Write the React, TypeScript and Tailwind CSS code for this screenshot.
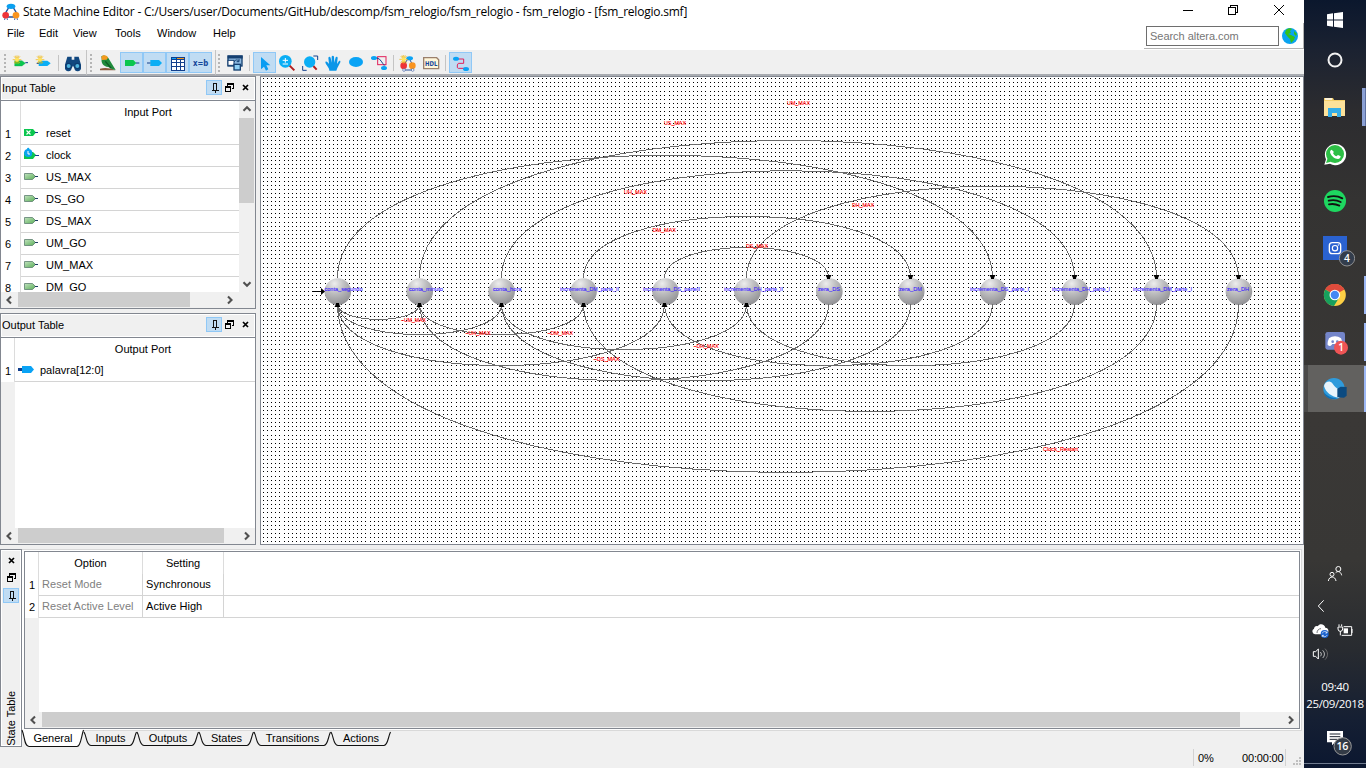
import type { ReactNode } from "react";

/* ---------- shared drawing helpers ---------- */

// Toolbar glyphs are drawn on a grid three times finer than the pixel grid.
function Tool({ x, on, children }: { x: number; on?: boolean; children: ReactNode }) {
  return (
    <div className={on ? "h-[21px] w-[23px] shrink-0 bg-[#c0dcf3] outline outline-1 -outline-offset-1 outline-[#90c8f6]" : "h-[21px] w-[23px] shrink-0"}>
      <svg className="block h-[21px] w-[23px]" viewBox={`${x} 156 69 63`}>{children}</svg>
    </div>
  );
}

function Grip() {
  return (
    <svg className="block h-[21px] w-[3px] shrink-0" viewBox="0 0 3 21" shapeRendering="crispEdges">
      {[1, 5, 9, 13, 17].map((y) => (
        <rect key={y} x="0" y={y + 1} width="2" height="2" fill="#b5b5b5" />
      ))}
    </svg>
  );
}

function Sep() {
  return <div className="h-4 w-px shrink-0 bg-[#c4c4c4]" />;
}

function Arrow({ dir }: { dir: "up" | "down" | "left" | "right" }) {
  const d = {
    up: "M4.5 9.7 8 6.2l3.5 3.5",
    down: "M4.5 6.3 8 9.8l3.5-3.5",
    left: "M10 4.5 6.5 8l3.5 3.5",
    right: "M6 4.5 9.500 8 6 11.500",
  }[dir];
  return (
    <svg className="block size-4 shrink-0" viewBox="0 0 16 16">
      <path d={d} fill="none" stroke="#505050" strokeWidth="2.1" />
    </svg>
  );
}

function PinBox() {
  return (
    <div className="flex h-[15px] w-4 items-center justify-center border border-[#90c8f6] bg-[#c0dcf3]">
      <svg className="block size-[13px]" viewBox="0 0 13 13" shapeRendering="crispEdges">
        <path d="M5 2h4v1H5zM5 2h1v7H5zM8 2h1v7H8zM4 9h7v1H4zM7 10h1v2H7z" fill="#111" />
      </svg>
    </div>
  );
}

function FloatIcon() {
  return (
    <svg className="block h-[9px] w-[9px]" viewBox="0 0 9 9" shapeRendering="crispEdges">
      <path d="M2 0h7v6H7V5h1V2H3v1H2zM0 3h6v6H0zM1 5v3h4V5z" fill="#000" fillRule="evenodd" />
    </svg>
  );
}

function CloseIcon() {
  return (
    <svg className="block size-[7px]" viewBox="0 0 7 7">
      <path d="M1 1l5 5M6 1 1 6" stroke="#000" strokeWidth="1.7" />
    </svg>
  );
}

function DockHeader({ title }: { title: string }) {
  return (
    <div className="flex h-[25px] items-center border border-b-2 border-[#828790] bg-[#f0f0f0] pb-px pr-[6px] outline outline-1 -outline-offset-2 outline-white">
      <span className="flex-1 pl-px">{title}</span>
      <PinBox />
      <div className="w-[3px]" />
      <FloatIcon />
      <div className="w-2" />
      <CloseIcon />
    </div>
  );
}

/* ---------- title bar, menu, toolbar ---------- */

function AppIcon() {
  return (
    <svg className="block size-[18px]" viewBox="0 0 54 54">
      <path d="M20 14 8 34M34 14l12 20M12 42h30" stroke="#27509b" strokeWidth="4" fill="none" />
      <ellipse cx="27" cy="10" rx="13" ry="8" fill="#0aa0f0" />
      <circle cx="11" cy="37" r="10" fill="#ee3338" />
      <circle cx="42" cy="37" r="10" fill="#f9931e" />
      <path d="M8 46v5M16 46v5M38 46v5M46 46v5" stroke="#4b66a8" strokeWidth="3" />
    </svg>
  );
}

function Spark({ x, y }: { x: number; y: number }) {
  return (
    <g transform={`translate(${x} ${y})`}>
      <path d="M0-13V13M-13 0H13M-9-10 9 10M9-10-9 10M-5-12 5 12M5-12-5 12" stroke="#f0b400" strokeWidth="2" />
      <circle r="6" fill="#ffe45e" />
    </g>
  );
}

function Toolbar() {
  return (
    <div className="flex h-[26px] items-center border-b-2 border-[#a9acb1] bg-[#f0f0f0] pt-px">
      <div className="w-1" />
      <Grip />
      <div className="w-[2px]" />
      <Tool x={27}>
        <path d="M44 182h22l10 8-10 8H44z" fill="#0ac64f" stroke="#07a344" />
        <path d="M76 188h8" stroke="#123f8c" strokeWidth="3" />
        <Spark x={51} y={179} />
      </Tool>
      <Tool x={96}>
        <path d="M116 182h26l10 8-10 8h-26z" fill="#0aaef5" />
        <path d="M110 190h7" stroke="#123f8c" strokeWidth="3" />
        <Spark x={120} y={179} />
      </Tool>
      <div className="w-[3px]" />
      <Sep />
      <div className="w-[3px]" />
      <Tool x={186}>
        <path d="M202 170h13v9h8v-9h13l7 24v8a10 10 0 0 1-20 3l-4-8-4 8a10 10 0 0 1-20-3v-8z" fill="#11477f" />
        <circle cx="206" cy="198" r="8" fill="#4fb3dd" stroke="#0d3c70" strokeWidth="4" />
        <circle cx="232" cy="198" r="8" fill="#4fb3dd" stroke="#0d3c70" strokeWidth="4" />
      </Tool>
      <div className="w-px" />
      <div className="h-[25px] w-px bg-[#c4c4c4]" />
      <div className="w-[3px]" />
      <Grip />
      <div className="w-[3px]" />
      <Tool x={288}>
        <path d="M300 206c14-4 32-2 47 5H300z" fill="#8b5a3c" />
        <path d="M304 169c6-5 16-3 21 5l22 36-10-2-12-7c-16-2-22-12-20-24z" fill="#1f8a3b" />
        <path d="M304 172c3-8 15-8 20 1l-4 6-14 1z" fill="#f39a1d" />
        <path d="M316 184l18 21" stroke="#0d5926" strokeWidth="4" />
      </Tool>
      <div className="w-px" />
      <Tool x={360} on>
        <path d="M375 180h25l9 9-9 9h-25z" fill="#0ac64f" />
        <path d="M408 189h10" stroke="#123f8c" strokeWidth="3" />
      </Tool>
      <Tool x={429} on>
        <path d="M451 180h26l9 9-9 9h-26z" fill="#0aaef5" />
        <path d="M441 189h10" stroke="#123f8c" strokeWidth="3" />
      </Tool>
      <Tool x={498} on>
        <g shapeRendering="crispEdges">
          <rect x="513" y="171" width="42" height="42" fill="#123f8c" />
          <path d="M516 180h12v6h-12zM531 180h9v6h-9zM543 180h9v6h-9zM516 189h12v9h-12zM531 189h9v9h-9zM543 189h9v9h-9zM516 201h12v9h-12zM531 201h9v9h-9zM543 201h9v9h-9z" fill="#fff" />
          <path d="M516 174h12v4h-12z" fill="#0aa3f5" />
          <path d="M531 174h21v4h-21z" fill="#f39a1d" />
        </g>
      </Tool>
      <Tool x={567} on>
        <text x="579" y="199" fontFamily="'DejaVu Sans', sans-serif" fontWeight="700" fontSize="24" fill="#14479a" textLength="46" lengthAdjust="spacingAndGlyphs">x=b</text>
      </Tool>
      <div className="w-[3px]" />
      <div className="h-[25px] w-px bg-[#c4c4c4]" />
      <div className="w-[2px]" />
      <Grip />
      <div className="w-[3px]" />
      <Tool x={672}>
        <rect x="684" y="168" width="42" height="30" fill="#8db9e0" stroke="#143f70" strokeWidth="4" />
        <path d="M683 171h45" stroke="#143f70" strokeWidth="9" />
        <rect x="684" y="181" width="18" height="15" fill="#fff" stroke="#143f70" strokeWidth="3" />
        <rect x="702" y="193" width="19" height="17" fill="#8ed0f5" stroke="#143f70" strokeWidth="4" />
        <path d="M703 186c2-8 10-8 14-2m0 0v-7m0 8h-7" stroke="#143f70" strokeWidth="3" fill="none" />
      </Tool>
      <div className="w-[2px]" />
      <Sep />
      <div className="w-[3px]" />
      <Tool x={9} on>
        <path d="M33 171v37l9-8 6 12 7-4-6-12h12z" fill="#0a9df2" />
      </Tool>
      <Tool x={78}>
        <path d="M118 196l15 15" stroke="#b01e1e" strokeWidth="6" />
        <circle cx="106" cy="184" r="19" fill="#0aaef5" />
        <path d="M98 181h16M106 174v14M98 192h16" stroke="#fff" strokeWidth="3" />
      </Tool>
      <Tool x={147}>
        <path d="M190 198l10 11" stroke="#b01e1e" strokeWidth="6" />
        <circle cx="179" cy="186" r="17" fill="#0aaef5" />
        <path d="M190 168h13v12M158 198v13h12" stroke="#123f8c" strokeWidth="3" fill="none" />
      </Tool>
      <Tool x={216}>
        <path d="M238 212c0-10-12-18-12-26 3-3 7 0 11 6l-2-19c2-4 6-3 7 1l3 14v-18c1-4 6-4 7 0l1 18 4-16c2-3 6-2 6 2l-2 18 6-9c3-2 5 0 4 4l-9 17-3 8z" fill="#0a96e8" />
      </Tool>
      <Tool x={285}>
        <ellipse cx="318" cy="186" rx="21" ry="15" fill="#0aa3f5" />
      </Tool>
      <Tool x={354}>
        <path d="M364 174h18M402 196v8" stroke="#123f8c" strokeWidth="2" />
        <ellipse cx="372" cy="174" rx="9" ry="6" fill="#0aa3f5" />
        <ellipse cx="402" cy="204" rx="9" ry="6" fill="#0aa3f5" />
        <rect x="383" y="170" width="25" height="24" fill="none" stroke="#e0215a" strokeWidth="3" />
        <path d="M381 174c12 2 14 16 23 22" stroke="#123f8c" strokeWidth="3" fill="none" />
      </Tool>
      <div className="w-[2px]" />
      <Sep />
      <div className="w-[2px]" />
      <Tool x={438}>
        <path d="M473 178l-12 17M479 178l8 15M462 210h24" stroke="#27509b" strokeWidth="3" />
        <ellipse cx="479" cy="175" rx="10" ry="6" fill="#0aa3f5" />
        <circle cx="461" cy="197" r="10" fill="#ee3338" />
        <circle cx="487" cy="197" r="10" fill="#f9931e" />
        <circle cx="462" cy="210" r="4" fill="#fff" stroke="#4b66a8" strokeWidth="2" />
        <circle cx="488" cy="210" r="4" fill="#fff" stroke="#4b66a8" strokeWidth="2" />
        <Spark x={461} y={178} />
      </Tool>
      <Tool x={507}>
        <path d="M521 173h39l6 6v27h-45z" fill="#fff6da" stroke="#9b806c" strokeWidth="4" />
        <text x="525" y="198" fontFamily="'DejaVu Sans', sans-serif" fontWeight="700" fontSize="20" fill="#14479a" textLength="37" lengthAdjust="spacingAndGlyphs">HDL</text>
      </Tool>
      <div className="w-[3px]" />
      <Sep />
      <div className="w-[3px]" />
      <Tool x={597} on>
        <path d="M620 177h21v13h-16l-3 5v8l3 2h20" stroke="#e0215a" strokeWidth="3" fill="none" />
        <ellipse cx="618" cy="176" rx="9" ry="6" fill="#0aa3f5" />
        <ellipse cx="648" cy="207" rx="9" ry="6" fill="#0aa3f5" />
      </Tool>
    </div>
  );
}

function TopArea() {
  return (
    <div className="flex h-[50px] justify-between bg-white">
      <div className="flex flex-col">
        <div className="flex h-6 items-center pl-[2px]">
          <AppIcon />
          <span className="whitespace-pre pl-[3px] font-['Open_Sans','Noto_Sans',sans-serif] text-[12px] tracking-[-0.22px]">
            State Machine Editor - C:/Users/user/Documents/GitHub/descomp/fsm_relogio/fsm_relogio - fsm_relogio - [fsm_relogio.smf]
          </span>
        </div>
        <div className="flex h-[17px] items-center pl-[7px]">
          <span className="w-8">File</span>
          <span className="w-[34px]">Edit</span>
          <span className="w-[42px]">View</span>
          <span className="w-[42px]">Tools</span>
          <span className="w-14">Window</span>
          <span>Help</span>
        </div>
      </div>
      <div className="flex flex-col items-end">
        <svg className="block h-[23px] w-[130px]" viewBox="1174 0 130 23" shapeRendering="crispEdges">
          <path d="M1183 10.500h10M1228.500 7.500h7v7h-7zM1230.500 7v-2h7v7h-2" stroke="#000" fill="none" />
          <path d="M1274 5l10 10M1284 5l-10 10" stroke="#000" shapeRendering="auto" />
        </svg>
        <div className="flex h-[26px] w-[160px] items-center border-b border-r border-[#b4b4b4] pl-[2px]">
          <div className="flex h-5 w-[133px] items-center border border-[#6e6e6e] pl-[3px] text-[#767676] tracking-[-0.03px]">Search altera.com</div>
          <svg className="ml-[3px] block size-4" viewBox="0 0 16 16">
            <circle cx="8" cy="8" r="8" fill="#0aa3f0" />
            <path d="M4 2c2-2 5-2 6-1L8 3l1 2-3 1 3 1 4 2-1 3-3 3-1-4-3-3-2-3z" fill="#35c11c" />
            <path d="M12 3l3 3-1 2-2-2z" fill="#35c11c" />
          </svg>
        </div>
      </div>
    </div>
  );
}

/* ---------- left docks ---------- */

const inputs = ["reset", "clock", "US_MAX", "DS_GO", "DS_MAX", "UM_GO", "UM_MAX", "DM_GO"];

function PortIcon({ kind }: { kind: number }) {
  if (kind === 0)
    return (
      <svg className="block h-3 w-[15px]" viewBox="0 0 15 12">
        <path d="M0 2h9l3 3.500L9 9H0z" fill="#0ac64f" />
        <path d="M11 5.500h3" stroke="#123f8c" />
        <path d="M2.500 3.500l4 4M6.500 3.500l-4 4" stroke="#fff" strokeWidth="1.1" />
      </svg>
    );
  if (kind === 1)
    return (
      <svg className="block h-3 w-[15px] overflow-visible" viewBox="0 0 15 12">
        <path d="M0 3h9l3 3-3 4H0z" fill="#0ac64f" />
        <path d="M11 6.500h4" stroke="#123f8c" />
        <circle cx="4.200" cy="4" r="4.100" fill="#0aa3f0" />
        <path d="M4 2v3h2" stroke="#fff" fill="none" />
        <circle cx="4.200" cy="0" r="1.200" fill="#0aa3f0" />
      </svg>
    );
  return (
    <svg className="block h-3 w-[15px]" viewBox="0 0 15 12">
      <defs>
        <linearGradient id="port" x1="0" x2="1" y2="1">
          <stop offset="0" stopColor="#c3e3c0" />
          <stop offset="1" stopColor="#58ad55" />
        </linearGradient>
      </defs>
      <path d="M.5 2.500h8l3 3-3 3h-8z" fill="url(#port)" stroke="#5d7f70" strokeWidth=".8" />
      <path d="M11 5.500h3" stroke="#1d3c63" />
    </svg>
  );
}

function InputDock() {
  return (
    <div className="flex h-[233px] flex-col">
      <DockHeader title="Input Table" />
      <div className="flex flex-1 flex-col border border-t-0 border-[#828790] bg-white">
        <div className="flex h-[191px]">
          <div className="flex w-[238px] flex-col overflow-hidden">
            <div className="flex h-[22px] shrink-0">
              <div className="w-5 border-r border-[#dcdcdc]" />
              <div className="flex flex-1 items-center justify-center pl-9">Input Port</div>
            </div>
            {inputs.map((name, i) => (
              <div key={name} className="flex h-[22px] shrink-0">
                <div className="flex w-5 items-center border-r border-[#dcdcdc] pb-px pl-1">{i + 1}</div>
                <div className="flex flex-1 items-center border-b border-[#d4d4d4] pb-0.5 pl-[3px]">
                  <PortIcon kind={i} />
                  <span className="pl-[7px]">{name}</span>
                </div>
              </div>
            ))}
          </div>
          <div className="flex w-4 flex-col justify-between bg-[#f0f0f0]">
            <div>
              <Arrow dir="up" />
              <div className="mt-px h-[85px] w-[15px] bg-[#cdcdcd]" />
            </div>
            <Arrow dir="down" />
          </div>
        </div>
        <div className="flex h-4 bg-[#f0f0f0]">
          <Arrow dir="left" />
          <div className="ml-px h-[15px] w-[172px] bg-[#cdcdcd]" />
          <div className="flex-1" />
          <Arrow dir="right" />
          <div className="w-[17px]" />
        </div>
      </div>
    </div>
  );
}

function OutputDock() {
  return (
    <div className="mt-1 flex h-[232px] flex-col">
      <DockHeader title="Output Table" />
      <div className="flex flex-1 flex-col border border-t-0 border-[#828790] bg-white">
        <div className="flex h-[22px]">
          <div className="w-[14px] border-r border-[#dcdcdc]" />
          <div className="flex flex-1 items-center justify-center pl-4">Output Port</div>
        </div>
        <div className="flex h-[22px]">
          <div className="flex w-[14px] items-center border-r border-[#dcdcdc] pb-px pl-1">1</div>
          <div className="flex flex-1 items-center border-b border-[#d4d4d4] pb-0.5 pl-[3px]">
            <svg className="block h-3 w-4" viewBox="0 0 16 12">
              <path d="M0 4h5v3H0z" fill="#123f8c" />
              <path d="M4 2h9l3 3.500L13 9H4z" fill="#0aa3f5" />
            </svg>
            <span className="pl-[6px]">palavra[12:0]</span>
          </div>
        </div>
        <div className="w-[14px] flex-1 bg-[#f0f0f0]" />
        <div className="flex h-4 bg-[#f0f0f0]">
          <Arrow dir="left" />
          <div className="ml-px h-[15px] w-[206px] bg-[#cdcdcd]" />
          <div className="flex-1" />
          <Arrow dir="right" />
        </div>
      </div>
    </div>
  );
}

/* ---------- state diagram ---------- */

// [text, left edge, width]
const states: [string, number, number][] = [
  ["conta_segundo", 324.5, 38],
  ["conta_minuto", 409, 34],
  ["conta_hora", 493, 28.5],
  ["incrementa_DM_parte_II", 560, 59],
  ["incrementa_DS_parteII", 643, 57],
  ["incrementa_DH_parte_II", 724, 59],
  ["zera_DS", 818, 22],
  ["zera_DM", 899, 23],
  ["incrementa_DS_parte_I", 970, 59],
  ["incrementa_DH_parte_I", 1052, 58],
  ["incrementa_DM_parte_I", 1133, 59],
  ["zera_DH", 1227, 22],
];

// [source state, target state, crest y]
const arcsAbove: [number, number, number][] = [
  [0, 8, 155.3],
  [1, 10, 140.5],
  [2, 9, 170.8],
  [3, 7, 216.5],
  [4, 6, 247.5],
  [5, 11, 186.2],
];
const arcsBelow: [number, number, number][] = [
  [1, 0, 319.4],
  [2, 0, 334.5],
  [3, 1, 334.5],
  [4, 0, 365.5],
  [5, 2, 349.5],
  [6, 1, 380.6],
  [7, 2, 380.6],
  [8, 4, 365.6],
  [9, 5, 365.6],
  [10, 3, 411.4],
  [11, 0, 472.4],
];

// [text, left edge, width, baseline]
const conditions: [string, number, number, number][] = [
  ["UM_MAX", 787, 23, 105],
  ["US_MAX", 664, 22, 125],
  ["UH_MAX", 624, 23, 194],
  ["DM_MAX", 652.5, 23.5, 232],
  ["DS_MAX", 746, 22, 248],
  ["DH_MAX", 852, 22, 207],
  ["~UM_MAX", 401, 25, 322],
  ["~UH_MAX", 465.5, 25, 335],
  ["~DM_MAX", 547.5, 25.5, 335],
  ["~DS_MAX", 593.5, 26, 361],
  ["~DH_MAX", 693.5, 25, 348],
  ["Clock_Restart", 1043, 35, 451],
];

// The grid pitch is fractional, so dots snap down to whole pixels.
const pitch = 4.096;
const stateX = (i: number) => Math.floor(337.3 + 20 * pitch * i - 0.05);
const steps = (origin: number, from: number, to: number) => {
  const out: number[] = [];
  for (let k = Math.ceil((from - origin) / pitch); origin + k * pitch < to; k++) out.push(Math.floor(origin + k * pitch));
  return out;
};
const gridColumns = steps(337.3, 262, 1302).map((x) => `M${x} 77h1v467h-1z`).join("");
const gridRows = steps(291.72, 78, 543).map((y) => `M261 ${y}h1042v1h-1042z`).join("");

function arc(from: number, to: number, y: number, crest: number) {
  const c = y + ((crest - y) * 4) / 3;
  const a = stateX(from) + 0.5;
  const b = stateX(to) + 0.5;
  return `M${a} ${y}C${a} ${c} ${b} ${c} ${b} ${y}`;
}

function Diagram() {
  return (
    <div className="h-[469px] w-[1044px] border border-[#828790] bg-white">
      <svg className="block h-[467px] w-[1042px]" viewBox="261 77 1042 467">
        <defs>
          <clipPath id="rows"><path d={gridRows} shapeRendering="crispEdges" /></clipPath>
          <radialGradient id="ball" cx=".38" cy=".2" r=".85">
            <stop offset="0" stopColor="#ededed" />
            <stop offset=".45" stopColor="#bcbcbe" />
            <stop offset="1" stopColor="#8c8c90" />
          </radialGradient>
        </defs>
        <path d={gridColumns} clipPath="url(#rows)" shapeRendering="crispEdges" />
        {states.map(([name], i) => (
          <circle key={name} cx={337.8 + 20 * pitch * i} cy="291.600" r="13.300" fill="url(#ball)" />
        ))}
        <g fill="none" stroke="#6a6a6a" strokeWidth="1" shapeRendering="crispEdges">
          {arcsAbove.map(([a, b, c]) => <path key={a} d={arc(a, b, 278, c)} />)}
          {arcsBelow.map(([a, b, c]) => <path key={a} d={arc(a, b, 304, c)} />)}
          <path d="M312 291.500h10" stroke="#000" />
        </g>
        <path d="M321 288v7l4-3.500z" />
        {arcsAbove.map(([a, b]) => <path key={a} d={`M${stateX(b) - 2.5} 275h6l-1.500 3v1h-3v-1z`} />)}
        {[0, 1, 2, 3, 4, 5].map((i) => <path key={i} d={`M${stateX(i) - 2.5} 307h6l-1.500-3v-1h-3v1z`} />)}
        <g fontFamily="'Liberation Sans', Arial, sans-serif" fontSize="6">
          {states.map(([name, x, w]) => (
            <text key={name} x={x} y="291" textLength={w} lengthAdjust="spacingAndGlyphs" fill="#3a1cff" stroke="#3a1cff" strokeWidth=".1">{name}</text>
          ))}
          {conditions.map(([name, x, w, y]) => (
            <text key={name} x={x} y={y} textLength={w} lengthAdjust="spacingAndGlyphs" fill="#ff0000" stroke="#ff0000" strokeWidth=".15">{name}</text>
          ))}
        </g>
      </svg>
    </div>
  );
}

/* ---------- bottom dock ---------- */

const tabs: [string, number][] = [
  ["General", 62],
  ["Inputs", 53],
  ["Outputs", 62],
  ["States", 55],
  ["Transitions", 77],
  ["Actions", 60],
];

function Tab({ name, width, active }: { name: string; width: number; active: boolean }) {
  return (
    <div className="grid shrink-0" style={{ width }}>
      <svg className="col-start-1 row-start-1 block h-4 w-full overflow-visible" viewBox={`0 0 ${width} 16`}>
        <path
          d={`M0 ${active ? -1 : 1}C3 6 2 ${active ? 15 : 14} 7 ${active ? 15.5 : 14.5}H${width - 7}C${width - 3} ${active ? 15 : 14} ${width - 3} 6 ${width - 0.5} ${active ? -1 : 1}`}
          fill={active ? "#fff" : "#f0f0f0"}
          stroke="#111"
          strokeWidth="1.100"
        />
      </svg>
      <span className="z-10 col-start-1 row-start-1 text-center leading-[15px]">{name}</span>
    </div>
  );
}

function BottomDock() {
  return (
    <div className="mt-1 flex h-[198px]">
      <div className="flex w-[22px] flex-col items-center justify-between border border-[#828790] pb-0 pt-[7px] outline outline-1 -outline-offset-2 outline-white">
        <div className="flex flex-col items-center">
          <CloseIcon />
          <div className="h-[9px]" />
          <FloatIcon />
          <div className="h-[6px]" />
          <PinBox />
        </div>
        <span className="rotate-180 whitespace-nowrap [writing-mode:vertical-rl]">State Table</span>
      </div>
      <div className="flex w-[1280px] flex-col">
        <div className="h-[182px] border border-l-0 border-[#d9d9d9] bg-white pl-[2px] pt-px">
          <div className="flex h-[178px] w-[1276px] flex-col border border-[#828790] bg-white">
            <div className="flex h-[22px]">
              <div className="w-[14px] border-r border-[#dcdcdc]" />
              <div className="flex w-[104px] items-center justify-center border-r border-[#dcdcdc] pb-px">Option</div>
              <div className="flex w-[81px] items-center justify-center border-r border-[#dcdcdc] pb-px">Setting</div>
            </div>
            {[["Reset Mode", "Synchronous"], ["Reset Active Level", "Active High"]].map(([a, b], i) => (
              <div key={a} className="flex h-[22px]">
                <div className="flex w-[14px] items-center border-r border-[#dcdcdc] pb-px pl-1">{i + 1}</div>
                <div className="flex flex-1 items-center border-b border-[#d4d4d4]">
                  <div className="flex h-full w-[104px] items-center border-r border-[#d4d4d4] pb-0.5 pl-[3px] tracking-[0.06px] text-[#808080]">{a}</div>
                  <div className="flex h-full w-[81px] items-center border-r border-[#d4d4d4] pb-0.5 pl-[3px] tracking-[0.06px]">{b}</div>
                </div>
              </div>
            ))}
            <div className="w-[14px] flex-1 bg-[#f0f0f0]" />
            <div className="flex h-4 bg-[#f0f0f0]">
              <Arrow dir="left" />
              <div className="ml-px h-[15px] w-[1198px] bg-[#cdcdcd]" />
              <div className="flex-1" />
              <Arrow dir="right" />
            </div>
          </div>
        </div>
        <div className="flex h-4">
          {tabs.map(([name, width], i) => <Tab key={name} name={name} width={width} active={i === 0} />)}
        </div>
      </div>
    </div>
  );
}

/* ---------- taskbar ---------- */

function Slot({ mark, active, wide, children }: { mark?: boolean; active?: boolean; wide?: boolean; children: ReactNode }) {
  return (
    <div className={active ? "flex h-[47px] shrink-0 items-center justify-end border-l-4 border-[#4b4a49] bg-[#62615f]" : "flex h-[47px] shrink-0 items-center justify-end"}>
      {children}
      <div className={mark ? (active ? "ml-[9px] h-[46px] w-[2px] bg-[#9db8f5]" : wide ? "ml-[7px] h-[38px] w-1 border-r border-[#5c6f9f] bg-[#8ba0d4]" : "ml-[9px] h-[38px] w-[2px] bg-[#9db8f5]") : "ml-[11px]"} />
    </div>
  );
}

// Each glyph occupies a 40x40 px cell.
function Glyph({ box, children }: { box: string; children: ReactNode }) {
  return <svg className="block size-10 shrink-0" viewBox={box}>{children}</svg>;
}

function Taskbar() {
  return (
    <div className="flex h-[768px] w-[62px] flex-col bg-[linear-gradient(#0b172d_0px,#1b2231_50px,#2c2c2f_110px,#343332_200px,#3a3836_420px,#383735_560px,#282b30_650px,#151f33_720px,#0b1730_768px)] font-['Open_Sans','Noto_Sans',sans-serif] text-white">
      <div className="flex h-10 shrink-0 items-center justify-center">
        <svg className="block size-4" viewBox="0 0 16 16" fill="#fff">
          <path d="M0 2.200 6 1.300v6.200H0zM7 1.200 16 0v7.500H7zM0 8.500h6v6.200l-6-.9zM7 8.500h9V16l-9-1.200z" />
        </svg>
      </div>
      <div className="flex h-10 shrink-0 items-center justify-center">
        <svg className="block size-4" viewBox="0 0 16 16"><circle cx="8" cy="8" r="6.500" fill="none" stroke="#f2f2f2" strokeWidth="2" /></svg>
      </div>
      <div className="h-[3px] shrink-0" />
      <Slot mark wide>
        <Glyph box="0 0 40 40">
          <path d="M9 11h9l1 2h11v16H9z" fill="#f5cf6a" />
          <path d="M9 14h21v15H9z" fill="#fde29a" />
          <path d="M10 12h7" stroke="#fff" strokeWidth="1.500" />
          <path d="M13 21h13v9h-4v-4h-5v4h-4z" fill="#35aee8" />
        </Glyph>
      </Slot>
      <Slot>
        <Glyph box="75 -21 120 120">
          <path d="M103 71l5-16A32 32 0 1 1 120 68z" fill="#fff" />
          <circle cx="135" cy="39" r="27" fill="#2dbf45" />
          <path d="M108 66l6-17 9 13z" fill="#2dbf45" />
          <path d="M125 26c-4 1-6 6-4 11 4 9 13 17 23 17 5 0 8-4 8-8l-8-4-5 4c-5-2-8-6-10-10l3-3z" fill="#fff" />
        </Glyph>
      </Slot>
      <Slot>
        <Glyph box="75 120 120 120">
          <circle cx="135" cy="180" r="33" fill="#1ed760" />
          <path d="M114 168c14-4 30-3 43 4M116 179c12-3 25-2 36 4M117 190c11-2 21-1 31 4" fill="none" stroke="#111" strokeWidth="5.500" strokeLinecap="round" />
        </Glyph>
      </Slot>
      <Slot>
        <Glyph box="75 261 120 120">
          <rect x="99" y="285" width="72" height="72" fill="#2a62d0" />
          <rect x="118" y="305" width="34" height="33" rx="9" fill="none" stroke="#fff" strokeWidth="4" />
          <circle cx="135" cy="321.500" r="8" fill="none" stroke="#fff" strokeWidth="3.500" />
          <circle cx="145" cy="312" r="2" fill="#fff" />
          <circle cx="171" cy="352" r="23" fill="#333d4c" stroke="#a0a0a0" strokeWidth="2.500" />
          <text x="171" y="363" textAnchor="middle" fontSize="31" fontWeight="600" fill="#fff">4</text>
        </Glyph>
      </Slot>
      <Slot mark>
        <Glyph box="75 402 120 120">
          <circle cx="134.500" cy="462" r="33" fill="#fdd044" />
          <path d="M134.500 462 106 445.500A33 33 0 0 1 163 445.500z" fill="#de4b3c" />
          <path d="M134.500 447h29a33 33 0 0 0-58-2z" fill="#de4b3c" />
          <path d="M106 445.500a33 33 0 0 0 26 49.500l16-26-14-7z" fill="#17a05d" />
          <circle cx="134.500" cy="462" r="16" fill="#fff" />
          <circle cx="134.500" cy="462" r="12.500" fill="#4587f3" />
        </Glyph>
      </Slot>
      <Slot mark>
        <Glyph box="75 543 120 120">
          <rect x="106" y="573" width="59" height="53" rx="7" fill="#7485c9" />
          <path d="M117 592c10-8 26-8 36 0 3 7 5 13 4 20-5 3-8 4-11 1l-3-4h-16l-3 4c-3 3-7 2-11-1-1-7 1-13 4-20z" fill="#fff" />
          <circle cx="128" cy="602" r="4" fill="#7485c9" />
          <circle cx="142" cy="602" r="4" fill="#7485c9" />
          <circle cx="153" cy="620" r="21" fill="#ef5455" />
          <text x="153" y="631" textAnchor="middle" fontSize="30" fontWeight="600" fill="#fff">1</text>
        </Glyph>
      </Slot>
      <Slot mark active>
        <Glyph box="75 684 120 120">
          <circle cx="132" cy="743" r="32" fill="#2f9bdc" />
          <path d="M102 735c2-10 10-14 18-13 12 3 10 20 35 25l-8 24c-22-4-40-16-45-36z" fill="#e9f4fb" />
          <path d="M101 752c8 12 22 19 42 19-16 8-38 1-42-19z" fill="#0f6fb4" />
          <path d="M142 743l10-6 18 1v26l-8 6-20-1z" fill="#0b4a80" />
        </Glyph>
      </Slot>
      <div className="h-[152px] shrink-0" />
      <svg className="block h-[104px] w-[62px] shrink-0" viewBox="372 132 186 312">
        <g fill="none" stroke="#fff" strokeWidth="3">
          <circle cx="475" cy="147" r="7.500" />
          <circle cx="456" cy="163" r="6" />
          <path d="M445 183c2-16 21-16 23 0M467 158c8-7 16-2 18 8" />
          <path d="M431 241l-16 17 16 17" />
          <path d="M491 320h24v26h-30M516 327v12M477 313v6M485 313v6M474 321h14v6a7 7 0 0 1-14 0zM481 333v13" />
        </g>
        <path d="M491 325h13v15h-13z" fill="#fff" />
        <path d="M405 343a9 9 0 0 1-3-17c1-8 9-9 11-7 6-10 21-7 23 4 9 0 12 10 7 16l-8 4z" fill="#fff" />
        <path d="M411 339c0-8 5-13 12-13" stroke="#32353b" strokeWidth="2" fill="none" />
        <circle cx="434" cy="342" r="12" fill="#1c63cf" />
        <path d="M427 340c2-7 11-8 14-1m0-5v5h-5M441 345c-2 6-11 7-14 1m0 5v-5h5" stroke="#fff" strokeWidth="2" fill="none" />
        <path d="M400 395h7l8-8v30l-8-8h-7z" stroke="#fff" strokeWidth="3" fill="none" />
        <path d="M421 396c4 4 4 9 0 13M428 391c7 7 7 16 0 23" stroke="#ddd" strokeWidth="2.500" fill="none" />
        <path d="M435 386c10 10 10 23 0 33" stroke="#777" strokeWidth="2.500" fill="none" />
      </svg>
      <div className="flex h-[54px] shrink-0 flex-col items-center pt-[10px] text-[11.5px] leading-[17px] tracking-[-0.35px]">
        <span>09:40</span>
        <span className="whitespace-nowrap">25/09/2018</span>
      </div>
      <svg className="block h-10 w-[62px] shrink-0" viewBox="372 606 186 120">
        <path d="M441 633h48v34h-24l-9 9v-9h-15z" fill="#fff" />
        <path d="M449 642h32M449 650h32M449 658h24" stroke="#1b2230" strokeWidth="3" />
        <circle cx="488" cy="679" r="26" fill="#333b46" stroke="#999" strokeWidth="3" />
        <text x="487" y="690" textAnchor="middle" fontSize="32" fontWeight="600" letterSpacing="-1" fill="#fff">16</text>
      </svg>
      <div className="flex-1" />
      <div className="mb-1 h-px bg-[#6f7b8f]" />
    </div>
  );
}

export default function App() {
  return (
    <div className="flex h-[768px] w-[1366px] overflow-hidden bg-[#f0f0f0] font-['Liberation_Sans',Arial,sans-serif] text-[11px] leading-[14px] text-black">
      <div className="flex w-[1304px] flex-col">
        <TopArea />
        <Toolbar />
        <div className="flex">
          <div className="w-64">
            <InputDock />
            <OutputDock />
          </div>
          <div className="w-1" />
          <Diagram />
        </div>
        <BottomDock />
        <div className="flex flex-1 items-center justify-end">
          <div className="h-[17px] w-px bg-[#d2d2d2]" />
          <span className="w-[48px] pl-1">0%</span>
          <span className="w-[43px] whitespace-nowrap tracking-[-0.18px]">00:00:00</span>
          <div className="h-[17px] w-px bg-[#d2d2d2]" />
          <svg className="ml-[6px] mt-2 block size-[10px]" viewBox="0 0 10 10" fill="#bfbfbf" shapeRendering="crispEdges">
            <path d="M7 0h2v2H7zM4 3h2v2H4zM7 3h2v2H7zM1 6h2v2H1zM4 6h2v2H4zM7 6h2v2H7z" />
          </svg>
          <div className="w-[2px]" />
        </div>
      </div>
      <Taskbar />
    </div>
  );
}
